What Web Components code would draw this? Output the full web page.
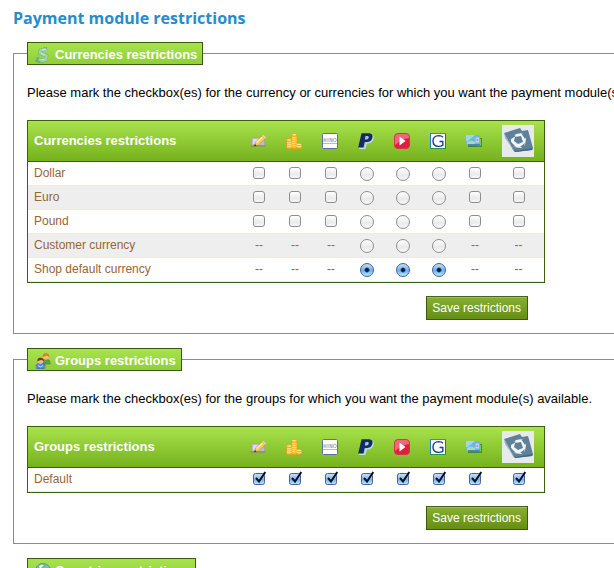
<!DOCTYPE html>
<html lang="en">
<head>
<meta charset="utf-8">
<title>Payment module restrictions</title>
<style>
html{scrollbar-width:none}
body{margin:0;background:#fff;overflow-x:hidden;font:13px/15px "Liberation Sans",Arial,sans-serif;color:#000}
</style>
</head>
<body>
<restrictions-page></restrictions-page>
<script>
const ICONS = {
  cheque: [16, `<path d="M1.500 4.500h13v8h-13z" fill="#b9bcc8" stroke="#a3a5b2"/><path d="M3 6h6v5H3z" fill="#dcdee8"/><path d="M.5 12.500h15v1H.5z" fill="#7d8375"/><path d="M4.500 13l1-4 6.500-6 3 3-6.500 6z" fill="#f9c95a" stroke="#c48932" stroke-width=".6"/><path d="M6.500 9.500l6-5.500" stroke="#fff0b4" stroke-width="1.200"/><path d="M12 3l1.300-1.200 2.700 2.400L15 6z" fill="#f3cdb4"/><path d="M4.300 13.300l.6-2.300 1.800 1.700z" fill="#3c2a18"/>`],
  coins: [16, `<g fill="#fbc02f" stroke="#e39a12" stroke-width=".7"><path d="M5.500 2v13q3 1.500 5.500 0V2z"/><path d="M.5 7v8q2.800 1.300 5.500 0V7z"/><path d="M10 11.500V15q3 1.400 5.700 0v-3.500z"/><ellipse cx="8.200" cy="1.800" rx="2.800" ry="1.300" fill="#ffe58a"/><ellipse cx="3.200" cy="7" rx="2.800" ry="1.300" fill="#ffe58a"/><ellipse cx="12.900" cy="11.500" rx="2.800" ry="1.300" fill="#ffe58a"/></g><path d="M6 4.500h4.500M6 6.500h4.500M6 8.500h4.500M6 10.500h4.500M6 12.500h4.500M1 9.500h4.500M1 11.500h4.500M1 13.500h4.500M10.500 13.500h5" stroke="#ffe27a" stroke-width=".9"/>`],
  bank: [16, `<rect x=".5" y=".5" width="15" height="15" rx="1" fill="#fff" stroke="#5b6fae"/><path d="M2 5v4M4 5v4M2 7h2M6 5v4M8 9V5l2 4V5" fill="none" stroke="#9b9eab" stroke-width=".8"/><circle cx="12.700" cy="7" r="1.700" fill="none" stroke="#9b9eab" stroke-width=".8"/><path d="M1 10.500h14" stroke="#b3bbd9"/>`],
  paypal: [16, `<path d="M5.500 1.500h7q3.500.7 2.700 4.200Q14 10 9.500 10H8.500l-1.500 5.500H1.500z" fill="#9fc7e3" stroke="#d7ecf5" stroke-width=".8"/><path fill-rule="evenodd" d="M3.500.3h7.700q4 .4 3.300 4-.9 4.600-5.300 4.700H6.700L5.500 14.500H.2zM7.500 3l-.7 3.500h1.700q1.900-.1 2.300-1.900.3-1.500-1.200-1.600z" fill="#172a61"/>`],
  play: [16, `<rect x=".5" y=".5" width="15" height="15" rx="3.500" fill="#df1f3d" stroke="#d3364f"/><path d="M1 4q0-3 3-3h8q3 0 3 3v1Q8 6 1 12z" fill="#f0667b"/><path d="M5.500 3.500l6 4.500-6 4.500z" fill="#fff"/>`],
  google: [16, `<path d="M0 0h16v16H0z" fill="#fff"/><path d="M.5 0v16" stroke="#2b78c8"/><path d="M0 .5h16" stroke="#2b9b90"/><path d="M15.500 1v15" stroke="#c83325"/><path d="M0 15.500h16" stroke="#2e9b40"/><path d="M13 4.300Q11.500 2.600 8.800 2.600 3 2.800 3 8q.1 5.200 5.600 5.400 2.400 0 4.200-1V8.500H9.500" fill="none" stroke="#1a3ba0" stroke-width="1.400"/>`],
  cards: [16, `<path d="M4 5h12v9H4z" fill="#359438"/><path d="M6 6h9v6.500H6z" fill="#7cc765"/><path d="M2 3.500h12v9H2z" fill="#4a86b8"/><path d="M0 2h14v9H0z" fill="#6db3e6"/><path d="M0 2h9l-7 6H0z" fill="#9fd4f3"/><path d="M1 9q4-3 8 0v2H1z" fill="#a3dcae"/><path d="M9.500 4.500H13v5H9.500z" fill="#b9d9ef"/><path d="M10.500 6H12v2h-1.500z" fill="#cc8480"/><path d="M2 12.500h10v1.500H2z" fill="#3b8a3d"/>`],
  module: [32, `<path d="M0 0h32v32H0z" fill="#e8e9ea"/><path d="M2 8L18 3l2 3 6-1 5 18-1 2-17 2-2-2z" fill="#5e8098"/><path d="M2 8l10 17 1 2L3 13z" fill="#9cb0be"/><path d="M12 25l2 1 17-3-1 2-17 2z" fill="#406783"/><path d="M9 14l5-5 6-1 4 6-1 6-4 3-7-1-3-5z" fill="#f1f3f4"/><path d="M13 12l6-1 2 6-5 2-4-3z" fill="#5e8098"/><path d="M9 14l2-4 3 1zM19 8l4 2 0 4zM23 18l-1 4-4 0zM14 22l-5-1 0-4z" fill="#5e8098"/>`],
  money: [16, `<path d="M8.500.5l3 1.500M12 4l-3-1.500-3.500 1L5 6l6.500 3-.5 3.500-3.500 1.500L4 12M3.500 10.500l-1 3 4 1.500" fill="none" stroke="#6fa384" stroke-width="3.600" stroke-dasharray="1.600 .7"/><path d="M12 4L9 2.500l-3.500 1L5 6l6.500 3-.5 3.500-3.500 1.500L4 12" fill="none" stroke="#9ad3b8" stroke-width="2.600"/><path d="M7 3l4-1M6 6l4 2M6 13l4-1" stroke="#d4eadb" stroke-width=".9"/>`],
  groups: [16, `<path d="M7 10q0-4 3.800-4T15.500 10v1H7z" fill="#4fa63f" stroke="#338129" stroke-width=".6"/><circle cx="11" cy="3.800" r="2.900" fill="#f5bb7b"/><path d="M7.600 4q0-4 3.600-3.800Q14.600.5 14.300 4L12 2.500z" fill="#dc7b20"/><path d="M14.500 9l1.500.5-.8 1.500" fill="#f09d6c"/><path d="M.6 15q0-4.800 5-4.800t5 4.800q-5 1.500-10 0z" fill="#4a8ce7" stroke="#2762b8" stroke-width=".7"/><path d="M3 12.500l2.500 1.500L8 12.500" fill="none" stroke="#b6dcff"/><circle cx="5.600" cy="8.200" r="2.700" fill="#f3b28a"/><path d="M2.400 8.300Q2 4.600 5.500 4.700q3.600-.1 3.300 3.600L6.500 6.800z" fill="#713923"/><path d="M0 13h1.500v2H0zM9.700 13h1.500v2H9.700z" fill="#ef8557"/>`],
  globe: [16, `<circle cx="8" cy="8" r="7.500" fill="#78bedb" stroke="#538fa8"/><path d="M2 6l3-4 4-1 2 3-4 1-1 4-3 1zM9 7l4-3 2 4-3 5-3-2z" fill="#75b873"/><path d="M4 3q3-2 5-1L5 6z" fill="#d9f4ef"/>`]
};

class UiIcon extends HTMLElement {
  connectedCallback() {
    const [size, art] = ICONS[this.getAttribute('name')];
    this.attachShadow({mode: 'open'}).innerHTML = `<style>:host{display:inline-block;vertical-align:middle}svg{display:block}</style><svg width="${size}" height="${size}" viewBox="0 0 ${size} ${size}" aria-hidden="true">${art}</svg>`;
  }
}
customElements.define('ui-icon', UiIcon);

class ActionButton extends HTMLElement {
  connectedCallback() {
    this.attachShadow({mode: 'open'}).innerHTML = `<style>
      :host{display:inline-block}
      button{display:block;height:24px;padding:0 6px 0 5px;border:1px solid #3a5a10;border-top-color:#44661a;background:linear-gradient(#9bc152 0 1px,#86ad2f 1px,#658e15);color:#fff;font:12px/22px "Liberation Sans",Arial,sans-serif}
    </style><button type="button"><slot></slot></button>`;
  }
}
customElements.define('action-button', ActionButton);

class FieldPanel extends HTMLElement {
  connectedCallback() {
    this.attachShadow({mode: 'open'}).innerHTML = `<style>
      :host{display:block}
      fieldset{margin:0;padding:0 0 13px 13px;border:1px solid #8b8b8b;border-right:0;min-width:0}
      legend{display:flex;align-items:center;gap:4px;box-sizing:border-box;height:23px;padding:2px 5px 0 7px;border:1px solid #3a5a10;background:linear-gradient(#a8e34d,#8fcf38);color:#fff;font-weight:bold}
      p{margin:20px 0;white-space:nowrap}
    </style><fieldset><legend><ui-icon name="${this.getAttribute('icon')}"></ui-icon><span>${this.getAttribute('heading')}</span></legend><p><slot name="intro"></slot></p><slot></slot></fieldset>`;
  }
}
customElements.define('field-panel', FieldPanel);

const MODULES = ['cheque','coins','bank','paypal','play','google','cards','module'];
/* Cell codes: c tick box, C ticked, r radio, R selected radio, - not available */
class RestrictionTable extends HTMLElement {
  connectedCallback() {
    const heading = this.getAttribute('heading');
    const rows = JSON.parse(this.getAttribute('rows'));
    const cell = (code, i, label) => {
      if (code === '-') return '<td>--</td>';
      const radio = code.toLowerCase() === 'r';
      return `<td><input type="${radio ? 'radio' : 'checkbox'}" name="${MODULES[i]}${radio ? '' : '[]'}" aria-label="${label}, ${MODULES[i]}"${/[CR]/.test(code) ? ' checked' : ''}></td>`;
    };
    this.attachShadow({mode: 'open'}).innerHTML = `<style>
      :host{display:block;width:max-content}
      table{border:1px solid #3d600c;border-spacing:0;color:#963;font-size:12px;line-height:14px}
      .name{width:213px}.mod{width:36px}.wide{width:51px}
      th,td{box-sizing:border-box;padding:0;text-align:center}
      thead th{height:41px;padding-right:2px;border-bottom:1px solid #3d600c}
      thead{background:linear-gradient(#a8e34d,#74b01b);color:#fff;font-size:13px}
      th:first-child{padding-left:6px;text-align:left}
      tbody th{font-weight:normal}
      tbody th,tbody td{height:24px;padding-bottom:2px;border-bottom:1px solid #efebdc}
      tbody tr:nth-child(even){background:#eee}
      input{appearance:none;display:block;box-sizing:border-box;margin:0 auto;width:12px;height:12px;border:1px solid #8e8e8e;border-radius:3px;background:linear-gradient(#fff,#eaeaea 60%,#f8f8f8)}
      [type=radio]{width:14px;height:14px;margin-top:2px;border-radius:50%}
      [type=radio]:checked{border-color:#4a5ba0;background:radial-gradient(circle,#06203c 0 1.500px,transparent 3px),linear-gradient(#c4dcf5,#6db2ee 55%,#b5edff)}
      [type=checkbox]:checked{width:14px;height:16px;border:0;border-radius:0;background:url("data:image/svg+xml,%3Csvg xmlns='http://www.w3.org/2000/svg' viewBox='0 0 14 16'%3E%3Cdefs%3E%3ClinearGradient id='a' x2='0' y2='1'%3E%3Cstop stop-color='%23d1e3f7'/%3E%3Cstop offset='.55' stop-color='%2377b7ee'/%3E%3Cstop offset='1' stop-color='%23b9efff'/%3E%3C/linearGradient%3E%3C/defs%3E%3Crect x='1.500' y='2.500' width='11' height='11' rx='2' fill='url(%23a)' stroke='%234e5e9d'/%3E%3Cpath d='M4 7l3 3.500L13.300 1' fill='none' stroke='%23061425' stroke-width='2'/%3E%3C/svg%3E")}
    </style><table><colgroup><col class="name"><col class="mod" span="7"><col class="wide"></colgroup>
    <thead><tr><th scope="col">${heading}</th>${MODULES.map(m => `<th scope="col" aria-label="${m}"><ui-icon name="${m}"></ui-icon></th>`).join('')}</tr></thead>
    <tbody>${rows.map(([label, codes]) => `<tr><th scope="row">${label}</th>${[...codes].map((c, i) => cell(c, i, label)).join('')}</tr>`).join('')}</tbody></table>`;
  }
}
customElements.define('restriction-table', RestrictionTable);

class RestrictionsPage extends HTMLElement {
  connectedCallback() {
    this.attachShadow({mode: 'open'}).innerHTML = `<style>
      :host{display:block;padding:8px 0 0 13px}
      h1{margin:0 0 14px;color:#268ccd;font:700 16px/20px "Open Sans","Trebuchet MS",sans-serif}
      main{display:grid;gap:14px;grid-template-columns:minmax(0,1fr)}
      .body{display:grid;gap:13px;width:max-content}
      action-button{justify-self:end;margin-right:17px}
    </style>
    <h1>Payment module restrictions</h1>
    <main>
      <field-panel icon="money" heading="Currencies restrictions">
        <span slot="intro">Please mark the checkbox(es) for the currency or currencies for which you want the payment module(s) available.</span>
        <div class="body"><restriction-table heading="Currencies restrictions" rows='[["Dollar","cccrrrcc"],["Euro","cccrrrcc"],["Pound","cccrrrcc"],["Customer currency","---rrr--"],["Shop default currency","---RRR--"]]'></restriction-table>
        <action-button>Save restrictions</action-button></div>
      </field-panel>
      <field-panel icon="groups" heading="Groups restrictions">
        <span slot="intro">Please mark the checkbox(es) for the groups for which you want the payment module(s) available.</span>
        <div class="body"><restriction-table heading="Groups restrictions" rows='[["Default","CCCCCCCC"]]'></restriction-table>
        <action-button>Save restrictions</action-button></div>
      </field-panel>
      <field-panel icon="globe" heading="Countries restrictions"></field-panel>
    </main>`;
  }
}
customElements.define('restrictions-page', RestrictionsPage);
</script>
</body>
</html>
